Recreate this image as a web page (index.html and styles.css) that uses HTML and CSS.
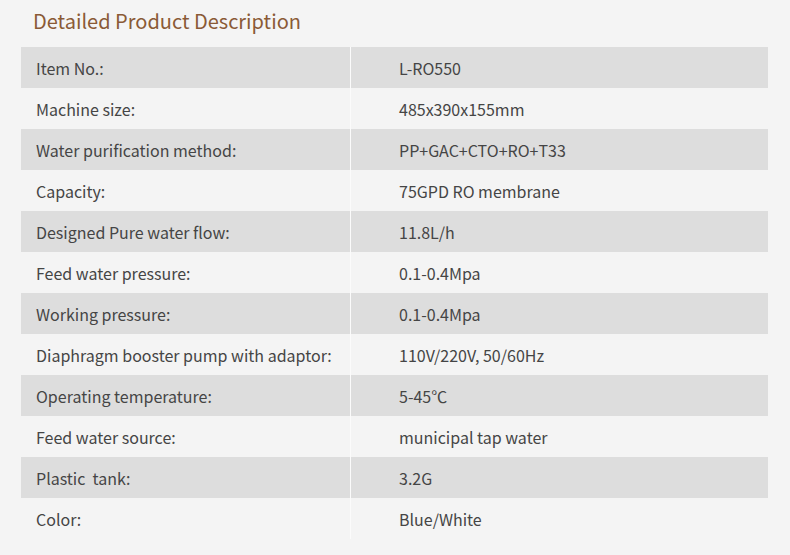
FILE: index.html
```html
<!DOCTYPE html>
<html>
<head>
<meta charset="utf-8">
<link rel="stylesheet" href="styles.css">
</head>
<body>
<div class="page">
  <h1 class="title">Detailed Product Description</h1>
  <div class="table">
    <div class="row odd"><div class="key">Item No.:</div><div class="val">L-RO550</div></div>
    <div class="row"><div class="key">Machine size:</div><div class="val">485x390x155mm</div></div>
    <div class="row odd"><div class="key">Water purification method:</div><div class="val">PP+GAC+CTO+RO+T33</div></div>
    <div class="row"><div class="key">Capacity:</div><div class="val">75GPD RO membrane</div></div>
    <div class="row odd"><div class="key">Designed Pure water flow:</div><div class="val">11.8L/h</div></div>
    <div class="row"><div class="key">Feed water pressure:</div><div class="val">0.1-0.4Mpa</div></div>
    <div class="row odd"><div class="key">Working pressure:</div><div class="val">0.1-0.4Mpa</div></div>
    <div class="row"><div class="key">Diaphragm booster pump with adaptor:</div><div class="val">110V/220V, 50/60Hz</div></div>
    <div class="row odd"><div class="key">Operating temperature:</div><div class="val">5-45℃</div></div>
    <div class="row"><div class="key">Feed water source:</div><div class="val">municipal tap water</div></div>
    <div class="row odd"><div class="key">Plastic&nbsp; tank:</div><div class="val">3.2G</div></div>
    <div class="row"><div class="key">Color:</div><div class="val">Blue/White</div></div>
  </div>
</div>
</body>
</html>
```
FILE: styles.css
```css
html, body {
  margin: 0;
  padding: 0;
  background: #f4f4f4;
}
.page {
  width: 790px;
  height: 555px;
  padding: 0 22px 0 21px;
  box-sizing: border-box;
  font-family: "Noto Sans CJK SC", "Noto Sans", sans-serif;
}
.title {
  margin: 0;
  padding: 7px 0 0 12px;
  height: 47px;
  box-sizing: border-box;
  font-size: 20px;
  font-weight: 400;
  line-height: 28px;
  color: #8a5a36;
}
.table {
  display: flex;
  flex-direction: column;
}
.row {
  display: grid;
  grid-template-columns: 330px 1fr;
  height: 41px;
  align-items: center;
  font-size: 16px;
  color: #454545;
}
.row.odd {
  background: #dddddd;
}
.key {
  height: 100%;
  display: flex;
  align-items: center;
  padding-left: 15px;
  border-right: 1px solid #fbfbfb;
}
.val {
  padding-left: 48px;
}
```
